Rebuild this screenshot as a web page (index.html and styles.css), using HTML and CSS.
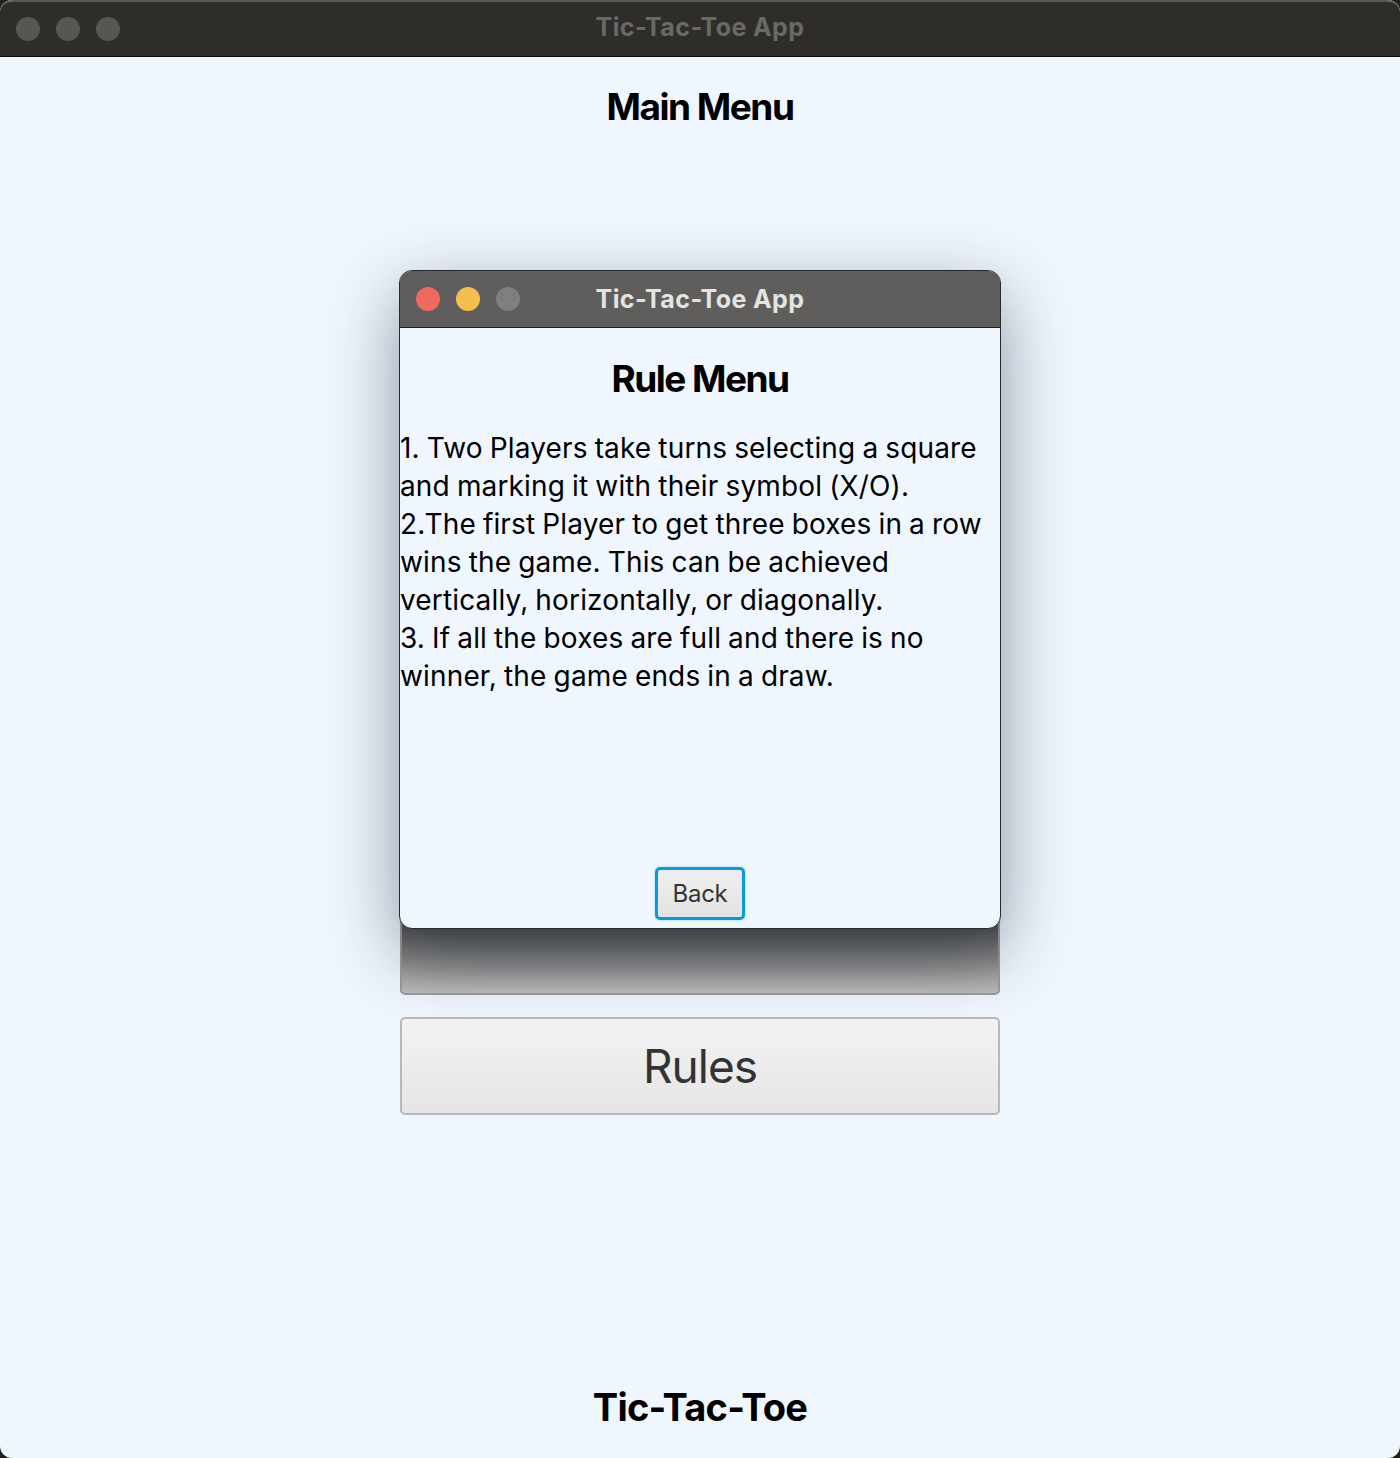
FILE: index.html
```html
<!DOCTYPE html>
<html>
<head>
<meta charset="utf-8">
<link rel="stylesheet" href="styles.css">
<title>Tic-Tac-Toe App</title>
</head>
<body>
<div class="app">
  <div class="titlebar dark">
    <div class="lights">
      <span class="light dim"></span>
      <span class="light dim"></span>
      <span class="light dim"></span>
    </div>
    <div class="title">Tic-Tac-Toe App</div>
  </div>
  <div class="content">
    <h1 class="heading">Main Menu</h1>
    <div class="buttons">
      <div class="menu-btn hidden-btn">Play</div>
      <div class="menu-btn">Rules</div>
    </div>
    <div class="footer">Tic-Tac-Toe</div>
  </div>

  <div class="dialog">
    <div class="titlebar modal-bar">
      <div class="lights">
        <span class="light red"></span>
        <span class="light yellow"></span>
        <span class="light gray"></span>
      </div>
      <div class="title">Tic-Tac-Toe App</div>
    </div>
    <div class="dialog-body">
      <h2 class="heading">Rule Menu</h2>
      <p class="rules">1. Two Players take turns selecting a square<br>and marking it with their symbol (X/O).<br>2.The first Player to get three boxes in a row<br>wins the game. This can be achieved<br>vertically, horizontally, or diagonally.<br>3. If all the boxes are full and there is no<br>winner, the game ends in a draw.</p>
      <div class="back-btn">Back</div>
    </div>
  </div>
</div>
</body>
</html>
```

FILE: styles.css
```css
* { box-sizing: border-box; }
html, body {
  margin: 0;
  padding: 0;
  background: #1f221c;
}
body {
  width: 1400px;
  height: 1458px;
  overflow: hidden;
  font-family: Inter, "Noto Sans", sans-serif;
}
.app {
  position: relative;
  width: 1400px;
  height: 1458px;
  border-radius: 12px;
  overflow: hidden;
  background: #eff6fe;
  display: flex;
  flex-direction: column;
}
.titlebar {
  position: relative;
  height: 57px;
  flex: none;
  display: flex;
  align-items: center;
  justify-content: center;
}
.titlebar.dark {
  background: #2f2d29;
  border-top: 2px solid #5a5956;
  border-bottom: 1px solid #0d0d0c;
  border-radius: 12px 12px 0 0;
  padding-bottom: 5px;
}
.lights {
  position: absolute;
  left: 16px;
  top: 50%;
  transform: translateY(-50%);
  display: flex;
  gap: 16px;
}
.titlebar.dark .lights { top: 27px; }
.light {
  width: 24px;
  height: 24px;
  border-radius: 50%;
  display: block;
}
.light.dim { background: #575651; }
.light.red { background: #ee6a5f; }
.light.yellow { background: #f5bf4f; }
.light.gray { background: #7f7f7d; }
.title {
  font-weight: 700;
  font-size: 25px;
  letter-spacing: 0.4px;
  color: #6a6965;
}
.content {
  flex: 1;
  display: flex;
  flex-direction: column;
  align-items: center;
  padding-bottom: 31px;
}
.heading {
  margin: 0;
  font-size: 37px;
  line-height: 40px;
  font-weight: 700;
  letter-spacing: -1.5px;
  color: #000;
}
.content > .heading { margin-top: 30px; }
.buttons {
  margin-top: 770px;
  display: flex;
  flex-direction: column;
  gap: 22px;
}
.menu-btn {
  width: 600px;
  height: 98px;
  border: 2px solid #b8b8b8;
  border-radius: 5px;
  background: linear-gradient(#f3f3f3, #e5e5e5);
  display: flex;
  align-items: center;
  justify-content: center;
  font-size: 46px;
  color: #333;
  letter-spacing: -1px;
}
.hidden-btn {
  background: linear-gradient(#555 32%, #bdbdbd);
  border-color: #9a9a9a;
  color: transparent;
}
.footer {
  margin-top: auto;
  font-size: 38px;
  line-height: 40px;
  font-weight: 700;
  letter-spacing: -0.8px;
  color: #000;
}
.dialog {
  position: absolute;
  left: 399px;
  top: 270px;
  width: 602px;
  height: 659px;
  border: 1px solid #2a2a2a;
  border-radius: 13px;
  overflow: hidden;
  background: #eff6fe;
  box-shadow: 0 24px 70px rgba(20, 30, 45, 0.45);
  display: flex;
  flex-direction: column;
}
.modal-bar {
  background: #5f5e5c;
  border-bottom: 1px solid #202020;
}
.modal-bar .lights { left: 16px; }
.modal-bar .title { color: #e4e4e2; }
.dialog-body {
  flex: 1;
  display: flex;
  flex-direction: column;
  align-items: center;
  padding-bottom: 8px;
}
.dialog-body .heading { margin-top: 31px; }
.rules {
  align-self: stretch;
  margin: 30px 0 0 0;
  font-size: 28px;
  line-height: 38px;
  letter-spacing: 0.15px;
  word-spacing: -1px;
  color: #000;
  white-space: nowrap;
}
.back-btn {
  margin-top: auto;
  width: 90px;
  height: 53px;
  border: 3px solid #0a9bd8;
  border-radius: 5px;
  background: linear-gradient(#f0f0f0, #e2e2e2);
  box-shadow: inset 0 0 0 1px #e6e6e6, 0 0 2px #6cc7ee;
  display: flex;
  align-items: center;
  justify-content: center;
  font-size: 24px;
  color: #333;
  letter-spacing: -0.3px;
}
```
